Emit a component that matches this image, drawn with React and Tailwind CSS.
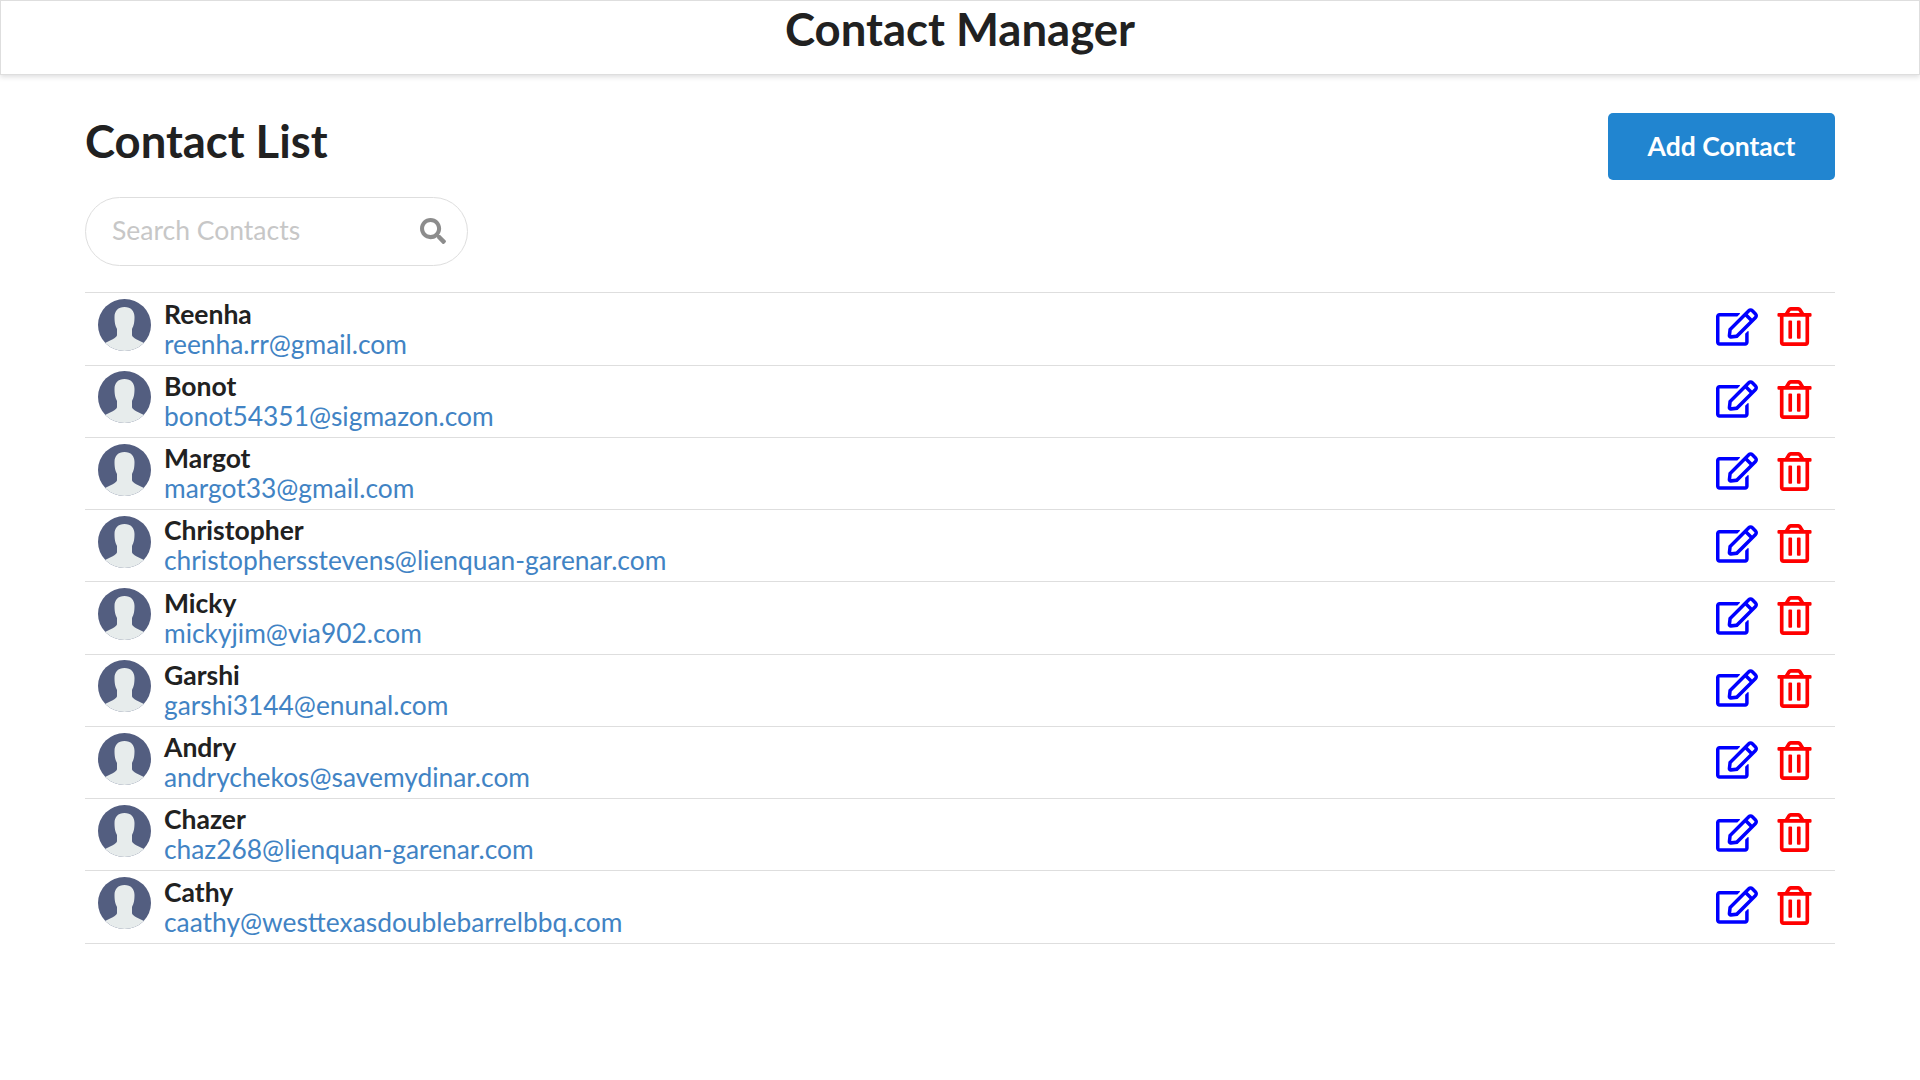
import { FaRegEdit, FaRegTrashAlt, FaSearch } from 'react-icons/fa'

const contacts = [
  { name: 'Reenha', email: 'reenha.rr@gmail.com' },
  { name: 'Bonot', email: 'bonot54351@sigmazon.com' },
  { name: 'Margot', email: 'margot33@gmail.com' },
  { name: 'Christopher', email: 'christophersstevens@lienquan-garenar.com' },
  { name: 'Micky', email: 'mickyjim@via902.com' },
  { name: 'Garshi', email: 'garshi3144@enunal.com' },
  { name: 'Andry', email: 'andrychekos@savemydinar.com' },
  { name: 'Chazer', email: 'chaz268@lienquan-garenar.com' },
  { name: 'Cathy', email: 'caathy@westtexasdoublebarrelbbq.com' },
]

function Avatar() {
  return (
    <svg className="w-[53px] h-[52px] shrink-0" viewBox="0 0 53 52">
      <clipPath id="avatar-clip">
        <ellipse cx="26.5" cy="26" rx="26.5" ry="26" />
      </clipPath>
      <g clipPath="url(#avatar-clip)">
        <rect width="53" height="52" fill="#535e80" />
        <path
          d="M26.5 8 C20 8 16.5 12 16.5 18 C16.5 24 17.5 27 19 30 L19 36 C19 38 16 40 7 44 L7 52 L46 52 L46 44 C37 40 34 38 34 36 L34 30 C35.5 27 36.5 24 36.5 18 C36.5 12 33 8 26.5 8 Z"
          fill="#e7ecec"
        />
      </g>
    </svg>
  )
}

function ContactRow({ contact }) {
  return (
    <div className="flex items-start h-[72.28px] border-b border-[#dedede] pl-[13px] pr-[21px]">
      <div className="pt-[5.7px]">
        <Avatar />
      </div>
      <div className="ml-[13px] flex-1 pt-[5.3px]">
        <div className="text-[26.5px] leading-[30px] font-bold text-[#212121]">{contact.name}</div>
        <div className="text-[26.35px] leading-[30px] text-[#4183c4]">{contact.email}</div>
      </div>
      <div className="flex items-center gap-[17px] pt-[12.6px]">
        <FaRegEdit className="text-[42px] text-[#0000ff]" />
        <FaRegTrashAlt className="text-[39px] text-[#ff0000]" />
      </div>
    </div>
  )
}

export default function App() {
  return (
    <div className="min-h-screen bg-white font-['Lato','Carlito','Open_Sans',sans-serif]">
      <div className="h-[75px] border border-[#dedede] shadow-[0_2px_5px_rgba(34,36,38,0.15)] text-center">
        <h2 className="text-[45.5px] leading-[56px] font-bold text-[#212121]">Contact Manager</h2>
      </div>

      <div className="mx-[85px]">
        <div className="flex justify-between items-start pt-[38px]">
          <div>
            <h2 className="text-[45.4px] leading-[56px] font-bold text-[#212121]">Contact List</h2>
            <div className="relative mt-[28px] w-[383px] h-[69px]">
              <input
                className="w-full h-full rounded-full border border-[#dedede] pl-[26px] pr-[60px] pb-[4px] text-[26.5px] outline-none placeholder:text-[#c7c7c7]"
                placeholder="Search Contacts"
              />
              <FaSearch className="absolute right-[22px] top-[21px] text-[26px] text-[#8c8c8c]" />
            </div>
          </div>
          <button className="w-[227px] h-[67px] rounded-[5px] bg-[#2185d0] text-white text-[26.5px] font-bold">
            Add Contact
          </button>
        </div>

        <div className="mt-[26.3px] border-t border-[#dedede]">
          {contacts.map((contact) => (
            <ContactRow key={contact.name} contact={contact} />
          ))}
        </div>
      </div>
    </div>
  )
}
